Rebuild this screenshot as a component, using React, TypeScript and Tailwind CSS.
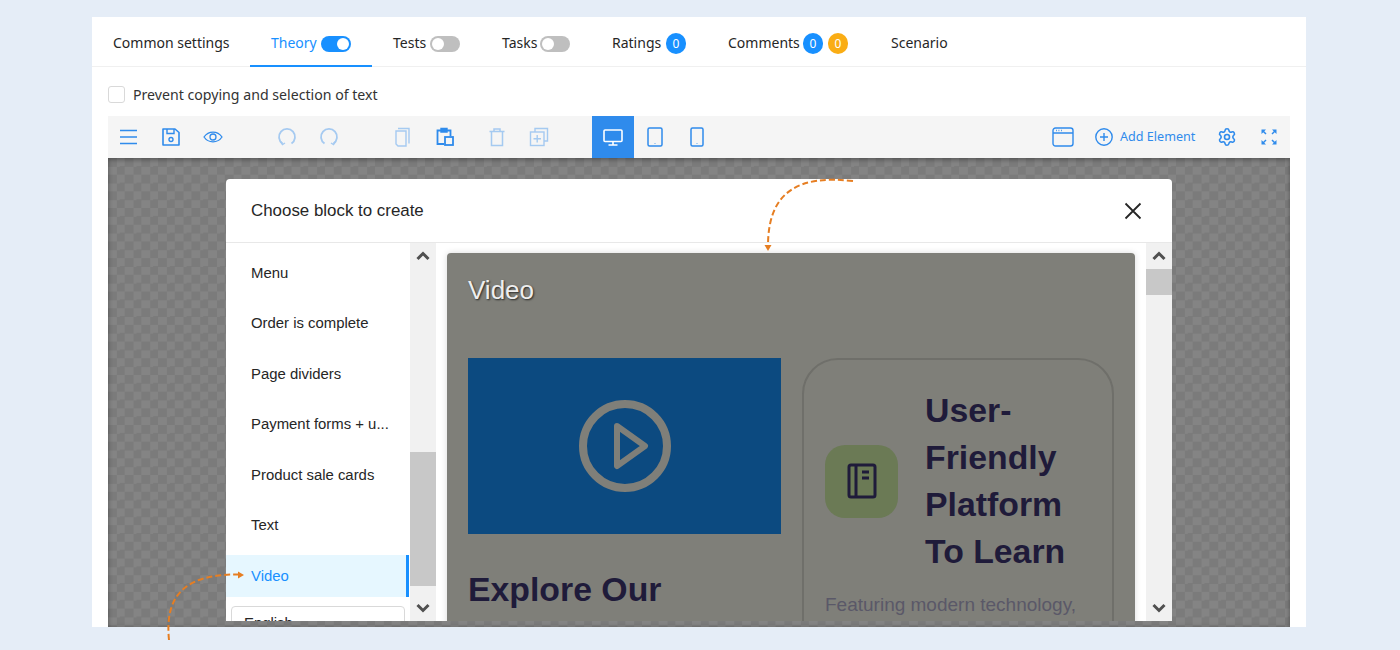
import React from 'react';
import { Settings } from 'lucide-react';

const Toggle = ({ on = false }: { on?: boolean }) => (
  <span className={`ml-auto mt-[4px] flex h-4 w-[30px] items-center rounded-full px-[2px] ${on ? 'justify-end bg-[#1890ff]' : 'justify-start bg-[#bfbfbf]'}`}>
    <span className="h-3 w-3 rounded-full bg-white" />
  </span>
);

const Badge = ({ color, className = '' }: { color: string; className?: string }) => (
  <span className={`mt-[3px] flex h-[21px] w-5 items-center justify-center rounded-full text-xs text-white ${color} ${className}`}>0</span>
);

const Tab = ({ children, active = false, className = '' }: { children: React.ReactNode; active?: boolean; className?: string }) => (
  <div className={`flex h-[50px] items-center border-b-2 pl-[21px] pt-[2px] text-[14px] ${active ? 'border-[#1890ff] text-[#1890ff]' : 'border-transparent text-[#262626]'} ${className}`}>
    {children}
  </div>
);

const Icon = ({ children, faded = false, size = 20 }: { children: React.ReactNode; faded?: boolean; size?: number }) => (
  <svg
    width={size}
    height={size}
    viewBox="0 0 20 20"
    fill="none"
    stroke="currentColor"
    strokeWidth="1.4"
    className={faded ? 'opacity-40' : ''}
  >
    {children}
  </svg>
);

const ToolButton = ({ children, active = false }: { children: React.ReactNode; active?: boolean }) => (
  <div className={`flex h-[42px] w-[42px] items-center justify-center ${active ? 'bg-[#2f8bec] text-white' : 'text-[#2f8bec]'}`}>
    {children}
  </div>
);

const menuItems = ['Menu', 'Order is complete', 'Page dividers', 'Payment forms + u...', 'Product sale cards', 'Text'];

const ScrollArrow = ({ up = false }: { up?: boolean }) => (
  <div className="flex h-[26px] items-center justify-center">
    <svg width="14" height="10" viewBox="0 0 14 10" fill="none" stroke="#505050" strokeWidth="3">
      <path d={up ? 'M1.5 8 7 2.5 12.5 8' : 'M1.5 2 7 7.5 12.5 2'} />
    </svg>
  </div>
);

const App = () => {
  return (
    <div className="relative h-[650px] overflow-hidden bg-[#e5edf7] pt-[17px] font-['Noto_Sans',sans-serif]">
      <div className="ml-[92px] h-[610px] w-[1214px] overflow-hidden bg-white">
        {/* Tabs */}
        <div className="flex h-[50px] border-b border-[#f0f0f0]">
          <Tab className="w-[158px]">Common settings</Tab>
          <Tab active className="w-[122px] pr-[21px]">
            Theory
            <Toggle on />
          </Tab>
          <Tab className="w-[109px] pr-[21px]">
            Tests
            <Toggle />
          </Tab>
          <Tab className="w-[110px] pr-[21px]">
            Tasks
            <Toggle />
          </Tab>
          <Tab className="w-[116px] pr-[21px]">
            Ratings
            <Badge color="bg-[#1890ff]" className="ml-auto" />
          </Tab>
          <Tab className="w-[163px] pr-[22px]">
            Comments
            <Badge color="bg-[#1890ff]" className="ml-auto" />
            <Badge color="bg-[#faad14]" className="ml-[5px]" />
          </Tab>
          <Tab>Scenario</Tab>
        </div>

        <div className="px-4">
          <label className="flex h-[49px] items-center gap-2 pt-[5px] text-[14.15px] text-[#333]">
            <span className="h-[17px] w-[17px] rounded-[3px] border border-[#d9d9d9] bg-white" />
            <span className="mt-[2px]">Prevent copying and selection of text</span>
          </label>

          {/* Toolbar */}
          <div className="flex h-[42px] items-center bg-[#f5f5f5]">
            <ToolButton>
              <Icon>
                <path d="M1 3.5h17M1 10h17M1 16.5h17" strokeWidth="1.6" />
              </Icon>
            </ToolButton>
            <ToolButton>
              <Icon>
                <path d="M2 2h12l4 3.500v12.500H2z" strokeLinejoin="round" strokeWidth="1.6" />
                <path d="M6 2v4.500h7V2" />
                <circle cx="10" cy="12.500" r="2" />
              </Icon>
            </ToolButton>
            <ToolButton>
              <Icon>
                <path d="M1 10c4.500-6.500 13.500-6.500 18 0-4.500 6.500-13.500 6.500-18 0z" strokeWidth="1.300" />
                <circle cx="10" cy="10" r="3" strokeWidth="1.300" />
              </Icon>
            </ToolButton>
            <div className="w-8" />
            <ToolButton>
              <Icon faded>
                <path d="M5.500 16.500A8 8 0 1 1 14.500 16.500" strokeWidth="1.800" />
                <path d="M3.500 14.500l2 3 2.500-1.500" />
              </Icon>
            </ToolButton>
            <ToolButton>
              <Icon faded>
                <path d="M5.500 16.500A8 8 0 1 1 14.500 16.500" strokeWidth="1.800" />
                <path d="M16.500 14.500l-2 3-2.500-1.500" />
              </Icon>
            </ToolButton>
            <div className="w-8" />
            <ToolButton>
              <Icon faded>
                <path d="M5 1.500h11v15" />
                <path d="M3 4h10v15H5l-2-2z" />
              </Icon>
            </ToolButton>
            <ToolButton>
              <Icon>
                <path d="M9 17H2.500V3.500h13V9" strokeWidth="1.800" />
                <path d="M6 1.500h6v3.500H6z" fill="currentColor" />
                <rect x="10" y="10" width="8" height="8" strokeWidth="1.800" />
              </Icon>
            </ToolButton>
            <div className="w-[10px]" />
            <ToolButton>
              <Icon faded>
                <path d="M2.500 4.500h15M7 4.500V2h6v2.500M4.500 4.500v14h11v-14" strokeWidth="1.500" />
              </Icon>
            </ToolButton>
            <ToolButton>
              <Icon faded>
                <path d="M6 5V1.500h12.500V14H15" />
                <rect x="1.500" y="5" width="13.500" height="13.500" />
                <path d="M8.200 8v7.500M4.500 11.700h7.500" />
              </Icon>
            </ToolButton>
            <div className="w-8" />
            <ToolButton active>
              <Icon>
                <rect x="1" y="3" width="18" height="11.500" rx="1" strokeWidth="1.600" />
                <path d="M10 14.500V18M5.500 18h9" strokeWidth="1.600" />
              </Icon>
            </ToolButton>
            <ToolButton>
              <Icon>
                <rect x="3" y="1" width="14" height="18" rx="1.500" strokeWidth="1.500" />
                <path d="M10 16v.600" />
              </Icon>
            </ToolButton>
            <ToolButton>
              <Icon>
                <rect x="4" y="1" width="12" height="18" rx="1.500" strokeWidth="1.500" />
                <path d="M10 16v.600" />
              </Icon>
            </ToolButton>

            <div className="ml-auto flex items-center">
              <ToolButton>
                <svg width="22" height="20" viewBox="0 0 22 20" fill="none" stroke="currentColor" strokeWidth="1.400">
                  <rect x="1" y="1" width="20" height="18" rx="2.500" />
                  <path d="M1 6h20M4 3.500h.8M6.500 3.500h.8M9 3.500h.8" />
                </svg>
              </ToolButton>
              <div className="flex w-[122px] items-center gap-[7px] pl-[11px] text-[12.6px] text-[#2f8bec]">
                <svg width="18" height="18" viewBox="0 0 18 18" fill="none" stroke="currentColor" strokeWidth="1.400">
                  <circle cx="9" cy="9" r="8.200" />
                  <path d="M9 5v8M5 9h8" />
                </svg>
                Add Element
              </div>
              <ToolButton>
                <Settings size={20} strokeWidth={1.9} />
              </ToolButton>
              <ToolButton>
                <svg width="16" height="16" viewBox="0 0 16 16" fill="currentColor" stroke="currentColor" strokeWidth="1.500">
                  <path d="M5 5 2 2" />
                  <path d="M11 5l3-3" />
                  <path d="M5 11l-3 3" />
                  <path d="M11 11l3 3" />
                  <path d="M.5.500h4.500L.5 5zM15.500.500H11l4.500 4.500zM.5 15.500H5L.5 11zM15.500 15.500H11l4.500-4.500z" strokeWidth="0" />
                </svg>
              </ToolButton>
            </div>
          </div>

          {/* Canvas */}
          <div className="h-[469px] overflow-hidden bg-[conic-gradient(#848484_25%,#7b7b7b_0_50%,#848484_0_75%,#7b7b7b_0)] bg-size-[16.7px_16.7px] pt-[21px] shadow-[inset_0_2px_4px_rgba(0,0,0,0.25),inset_0_0_5px_rgba(0,0,0,0.15)]">
            <div className="mx-auto h-[442px] w-[946px] overflow-hidden rounded-t-[4px] bg-white font-['Liberation_Sans',sans-serif]">
              <div className="flex h-[64px] items-center justify-between border-b border-[#e8e8e8] pl-[25px] pr-[29px]">
                <span className="text-[16.9px] text-[#262626]">Choose block to create</span>
                <svg width="20" height="20" viewBox="0 0 20 20" fill="none" stroke="#262626" strokeWidth="1.800">
                  <path d="M2.500 2.500l15 15M17.500 2.500l-15 15" />
                </svg>
              </div>

              <div className="flex h-[378px]">
                {/* Block list */}
                <div className="flex w-[184px] flex-col pt-[9px] text-[14.9px] text-[#262626]">
                  <div className="flex flex-col gap-[8.500px]">
                    {menuItems.map(item => (
                      <div key={item} className="flex h-[42px] items-center pl-[25px]">
                        {item}
                      </div>
                    ))}
                    <div className="mr-px flex h-[42px] items-center border-r-[3px] border-[#1890ff] bg-[#e6f7ff] pl-[25px] text-[#1890ff]">
                      Video
                    </div>
                  </div>
                  <div className="mx-[5px] mt-[9px] rounded-[4px] border border-[#d9d9d9] px-3 py-[6px] leading-[20px]">English</div>
                </div>

                <div className="flex w-[26px] flex-col bg-[#f1f1f1]">
                  <ScrollArrow up />
                  <div className="mt-[183px] h-[134px] bg-[#c8c8c8]" />
                  <div className="flex-1" />
                  <ScrollArrow />
                </div>

                {/* Preview */}
                <div className="flex-1 overflow-hidden pl-[11px] pr-[11px] pt-[10px]">
                  <div className="h-[500px] rounded-[4px] bg-[#7f7f79] px-[21px] pt-[20px] shadow-[0_0_6px_rgba(0,0,0,0.15)]">
                    <div className="text-[26px] leading-[34px] text-[#eee] [text-shadow:1px_1px_2px_rgba(0,0,0,0.7)]">Video</div>
                    <div className="mt-[51px] grid grid-cols-[313px_312px] gap-x-[21px]">
                      <div>
                        <div className="flex h-[176px] items-center justify-center bg-[#0c4a80]">
                          <svg width="94" height="94" viewBox="0 0 94 94" fill="none" stroke="#7f7f79" strokeWidth="8" strokeLinejoin="round">
                            <circle cx="47" cy="47" r="42" />
                            <path d="M39 27l28 20-28 20z" strokeWidth="6" />
                          </svg>
                        </div>
                        <div className="mt-[32px] text-[33.800px] font-bold leading-[47px] text-[#1f1b3a]">Explore Our</div>
                      </div>
                      <div className="h-[400px] rounded-[36px] border-2 border-[#6f6f6a] px-[21px] pt-[27px]">
                        <div className="flex items-center gap-[27px]">
                          <div className="flex h-[73px] w-[73px] shrink-0 items-center justify-center rounded-[20px] bg-[#6b7a55]">
                            <svg width="30" height="36" viewBox="0 0 30 36" fill="none" stroke="#1f1b3a" strokeWidth="3" strokeLinejoin="round">
                              <rect x="2" y="2" width="26" height="32" rx="2" />
                              <path d="M9 2v32M15 9h7M15 15h7" />
                            </svg>
                          </div>
                          <div className="text-[33.800px] font-bold leading-[47px] text-[#1f1b3a]">User-Friendly Platform To Learn</div>
                        </div>
                        <div className="mt-[15px] text-[19px] leading-[30px] text-[#5a5868]">Featuring modern technology,</div>
                      </div>
                    </div>
                  </div>
                </div>

                <div className="flex w-[26px] flex-col bg-[#f1f1f1]">
                  <ScrollArrow up />
                  <div className="h-[26px] bg-[#c8c8c8]" />
                  <div className="flex-1" />
                  <ScrollArrow />
                </div>
              </div>
            </div>
          </div>
        </div>
      </div>

      {/* Callout arrows */}
      <svg width="1400" height="650" className="pointer-events-none absolute left-0 top-0" fill="none">
        <path d="M853 181C800 175 768 190 768 246" stroke="#e67e22" strokeWidth="2" strokeDasharray="6 3" />
        <path d="M764.500 245h7l-3.500 6z" fill="#e67e22" />
        <path d="M169 640C165 600 180 574 238 574.500" stroke="#e67e22" strokeWidth="2" strokeDasharray="6 3" />
        <path d="M238 571.500v7l6-3.500z" fill="#e67e22" />
      </svg>
    </div>
  );
};

export default App;
